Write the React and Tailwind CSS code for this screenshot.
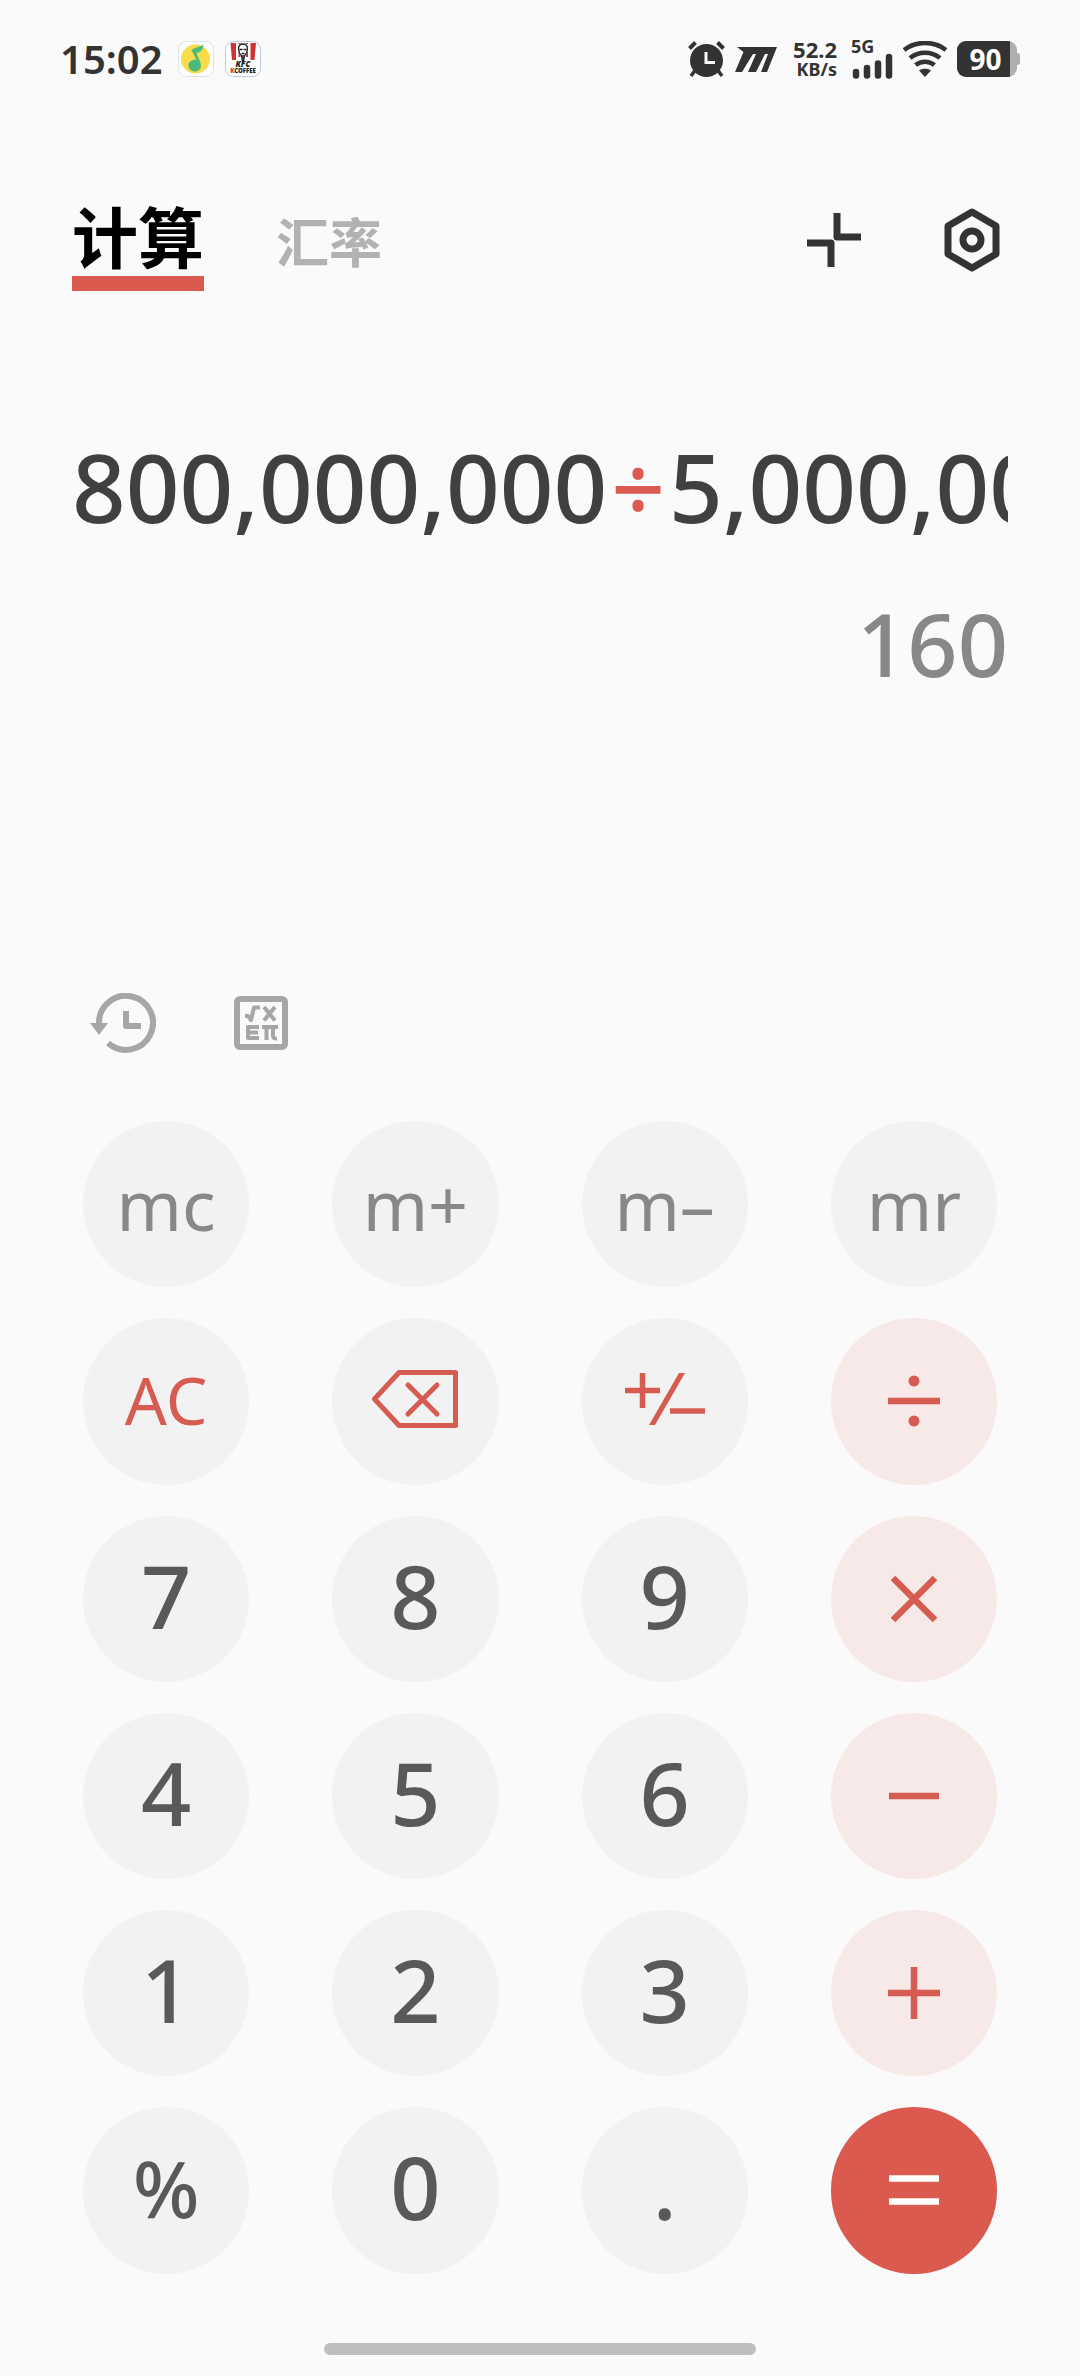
import { useState } from "react";
import clsx from "clsx";

function MusicIcon() {
  return (
    <svg viewBox="0 0 36 36" className="size-9" aria-hidden="true">
      <rect x="0.5" y="0.5" width="35" height="35" rx="8" fill="#fff" stroke="#dfe3e6" />
      <circle cx="17.5" cy="18" r="14.5" fill="#f8dc49" />
      <path
        d="M25.500 3.500c-3 2.500-7.500 2.200-12 5.500l5 10c-4-.8-8 1.500-8 5.500 0 3.500 3 6 6.500 6s6-2.800 6-6.200c0-3.300-3.500-9-4.500-12.300 3.500-.6 6.500-2.500 7-8.500z"
        fill="#4cba7c"
      />
    </svg>
  );
}

function CoffeeIcon() {
  return (
    <svg viewBox="0 0 36 36" className="size-9" aria-hidden="true">
      <rect x="0.5" y="0.5" width="35" height="35" rx="8" fill="#fff" stroke="#b9cbe0" />
      <path d="M5.500 2h5.500v17H7zM13.500 2h2v14h-2zM21 2h2v14h-2zM25.500 2H31l-1.500 17h-4z" fill="#cf3434" />
      <path d="M12.500 3h11v6l-3 6h-5l-3-6z" fill="#fff" />
      <path
        d="M13.500 8c0-3.500 2-5 4.500-5s4.500 1.500 4.500 5l-1 4-2 3-1 5h-1l-1-5-2-3z"
        fill="none"
        stroke="#222"
        strokeWidth="1.300"
      />
      <path d="M14.500 8.500h3m1 0h3M16.500 12.500h3M18 14v5" stroke="#222" strokeWidth="1.500" />
      <text x="18" y="25.500" textAnchor="middle" fontSize="8" fontWeight="900" fontStyle="italic" fill="#1b1b1b">
        KFC
      </text>
      <text x="18" y="32" textAnchor="middle" fontSize="6" fontWeight="900" fill="#1b1b1b">
        <tspan fill="#cf3434">K</tspan>COFFEE
      </text>
    </svg>
  );
}

function AlarmIcon() {
  return (
    <svg viewBox="0 0 37 37" className="size-[37px]" fill="none" aria-hidden="true">
      <path d="M8 28l-5 7M29 28l5 7" stroke="#333" strokeWidth="3.500" />
      <circle cx="18.500" cy="19.500" r="16.500" fill="#333" />
      <path d="M1.500 7.500l6-6M35.500 7.500l-6-6" stroke="#333" strokeWidth="4" />
      <path d="M18 11v10.500h9" stroke="#fafafa" strokeWidth="3" />
    </svg>
  );
}

function MotionIcon() {
  return (
    <svg viewBox="0 0 42 25" className="h-[25px] w-[42px]" fill="#333" aria-hidden="true">
      <path d="M2 0h40L32 25h-6l7-18h-3l-9 18h-8l8-18h-3L7 25H0L8.500 5z" />
    </svg>
  );
}

function SignalIcon() {
  return (
    <svg viewBox="0 0 42 26" className="h-[26px] w-[42px]" stroke="#333" strokeWidth="6.500" strokeLinecap="round" aria-hidden="true">
      <path d="M5 19v3.500M16 15v7.500M27 10.500v12M38 4v18.500" />
    </svg>
  );
}

function WifiIcon() {
  return (
    <svg viewBox="0 0 44 36" className="h-9 w-11" fill="none" stroke="#333" strokeWidth="4.500" aria-hidden="true">
      <path d="M1 9C13-.5 31-.5 43 9M7 17c8.500-7 21.500-7 30 0M12.500 24c5.500-4.500 13.500-4.500 19 0" />
      <path d="M22 36l-6-6.500c3-2.500 9-2.500 12 0z" fill="#333" stroke="none" />
    </svg>
  );
}

function Battery({ level }) {
  return (
    <div className="flex items-center">
      <div className="flex h-9 w-[60px] overflow-hidden rounded-[9px] bg-[#afafaf]">
        <span className="flex h-full w-[53px] items-center justify-center bg-[#333] pl-1 text-[28px] leading-none font-bold text-white">
          {level}
        </span>
      </div>
      <span className="h-3 w-[3px] rounded-r-full bg-[#afafaf]" />
    </div>
  );
}

function StatusBar() {
  return (
    <div className="flex h-[118px] items-center justify-between px-[60px] text-[#333]">
      <div className="flex items-center gap-[11px]">
        <span className="mr-1 text-[40px] leading-none font-semibold">15:02</span>
        <MusicIcon />
        <CoffeeIcon />
      </div>
      <div className="flex items-center gap-[10px]">
        <AlarmIcon />
        <MotionIcon />
        <div className="mr-1 flex w-[50px] flex-col items-end font-bold">
          <span className="text-[22px] leading-[20px]">52.2</span>
          <span className="text-[18px] leading-[20px]">KB/s</span>
        </div>
        <div className="flex flex-col">
          <span className="text-[18px] leading-[13px] font-bold">5G</span>
          <SignalIcon />
        </div>
        <WifiIcon />
        <Battery level={90} />
      </div>
    </div>
  );
}

function ShrinkIcon() {
  return (
    <svg viewBox="0 0 56 56" className="size-14" fill="none" stroke="#333" strokeWidth="7" strokeLinejoin="round" aria-hidden="true">
      <path d="M31 1v24h24M1 31h24v24" />
    </svg>
  );
}

function SettingsIcon() {
  return (
    <svg viewBox="0 0 56 64" className="h-16 w-14" fill="none" stroke="#333" strokeWidth="7" strokeLinejoin="round" aria-hidden="true">
      <path d="M28 4l24 14v28L28 60 4 46V18z" />
      <circle cx="28" cy="32" r="9" />
    </svg>
  );
}

function HistoryIcon() {
  return (
    <svg viewBox="0 0 66 60" className="h-[60px] w-[66px]" fill="none" stroke="#a6a6a6" strokeWidth="6" aria-hidden="true">
      <path d="M9 31a27 27 0 1 1 9 19" />
      <path d="M0 30h18l-9 12z" fill="#a6a6a6" stroke="none" />
      <path d="M36 18v15h15" strokeLinejoin="round" />
    </svg>
  );
}

function FormulaIcon() {
  return (
    <svg viewBox="0 0 54 54" className="size-[54px]" fill="none" stroke="#a6a6a6" aria-hidden="true">
      <rect x="3" y="3" width="48" height="48" rx="3" strokeWidth="6" />
      <g strokeWidth="4" strokeLinejoin="round">
        <path d="M11 20h3l3 4 3-12.500h6M30 11l11 13.500M41 11L30 24.500" />
        <path d="M25 31H14v11h11M14 36.500h10M28 31h16M32.500 31v13M39 31v9q0 3 4 2.500" />
      </g>
    </svg>
  );
}

function BackspaceIcon() {
  return (
    <svg viewBox="0 0 86 58" className="h-[58px] w-[86px]" fill="none" stroke="#d65c51" strokeWidth="5" strokeLinejoin="round" strokeLinecap="round" aria-hidden="true">
      <path d="M27 2.500h56.500v53H27L2.500 29z" />
      <path d="M36 15l29 29M65 15L36 44" />
    </svg>
  );
}

function SignIcon() {
  return (
    <svg viewBox="0 0 80 52" className="h-[52px] w-20" fill="none" stroke="#d65c51" strokeWidth="5.500" aria-hidden="true">
      <path d="M0 17.500h35M17.500 0v35M45 38h35" />
      <path d="M54 0h6L30 52h-6z" fill="#d65c51" stroke="none" />
    </svg>
  );
}

function OperatorIcon({ d, dots = false }) {
  return (
    <svg viewBox="0 0 52 52" className="size-[52px]" fill="none" stroke="currentColor" strokeWidth="6.500" aria-hidden="true">
      <path d={d} />
      {dots && (
        <g fill="currentColor" stroke="none">
          <circle cx="26" cy="6" r="5.500" />
          <circle cx="26" cy="46" r="5.500" />
        </g>
      )}
    </svg>
  );
}

const keyStyles = {
  memory: "bg-[#f2f2f2] text-[#888] text-[70px]",
  clear: "bg-[#f2f2f2] text-[#d65c51] text-[66px] pb-1",
  digit: "bg-[#f2f2f2] text-[#595959] text-[88px] font-medium pb-2",
  percent: "bg-[#f2f2f2] text-[#595959] text-[78px] font-medium pb-1",
  operator: "bg-[#f7e9e7] text-[#d65c51]",
  equals: "bg-[#da5a4f] text-white",
};

const digit = (label) => ({ label, kind: "digit" });

const keys = [
  { label: "mc", kind: "memory" },
  { label: "m+", kind: "memory" },
  { label: "m–", kind: "memory" },
  { label: "mr", kind: "memory" },
  { label: "AC", kind: "clear" },
  { label: "退格", kind: "clear", icon: <BackspaceIcon /> },
  { label: "正负", kind: "clear", icon: <SignIcon /> },
  { label: "除", kind: "operator", icon: <OperatorIcon d="M0 26h52" dots /> },
  digit("7"),
  digit("8"),
  digit("9"),
  { label: "乘", kind: "operator", icon: <OperatorIcon d="M5 5l42 42M47 5L5 47" /> },
  digit("4"),
  digit("5"),
  digit("6"),
  { label: "减", kind: "operator", icon: <OperatorIcon d="M1 26h50" /> },
  digit("1"),
  digit("2"),
  digit("3"),
  { label: "加", kind: "operator", icon: <OperatorIcon d="M0 26h52M26 0v52" /> },
  { label: "%", kind: "percent" },
  digit("0"),
  digit("."),
  { label: "等于", kind: "equals", icon: <OperatorIcon d="M1 14.500h50M1 37.500h50" /> },
];

function Key({ label, kind, icon }) {
  return (
    <button
      type="button"
      aria-label={icon ? label : undefined}
      className={clsx(
        "flex aspect-square w-full cursor-pointer items-center justify-center rounded-full leading-none active:opacity-70",
        keyStyles[kind],
      )}
    >
      {icon ?? label}
    </button>
  );
}

function Header() {
  const [tab, setTab] = useState("计算");

  return (
    <header className="flex items-start justify-between pt-[86px] pr-[80px] pl-[72px]">
      <nav className="flex items-end gap-[72px] font-['Noto_Sans_CJK_SC',sans-serif] font-bold">
        {["计算", "汇率"].map((name) => (
          <button
            key={name}
            type="button"
            onClick={() => setTab(name)}
            className={clsx(
              "cursor-pointer border-b-[15px]",
              tab === name
                ? "border-[#da5a4f] pb-3 text-[66px] leading-[60px] text-black"
                : "border-transparent text-[53px] leading-[72px] text-[#b2b2b2]",
            )}
          >
            {name}
          </button>
        ))}
      </nav>
      <div className="flex items-center gap-[82px] pt-1">
        <button type="button" aria-label="小窗" className="cursor-pointer">
          <ShrinkIcon />
        </button>
        <button type="button" aria-label="设置" className="cursor-pointer">
          <SettingsIcon />
        </button>
      </div>
    </header>
  );
}

export default function App() {
  return (
    <div className="flex min-h-screen flex-col bg-[#fafafa] font-['Noto_Sans','Noto_Sans_CJK_SC',sans-serif]">
      <StatusBar />
      <Header />

      <main className="flex flex-col">
        <section className="mt-[136px] px-[72px] font-medium">
          <div className="overflow-hidden text-[94px] leading-[120px] whitespace-nowrap text-[#404040]">
            800,000,000<span className="mx-1 text-[#da5a4f]">÷</span>5,000,000
          </div>
          <div className="mt-[42px] text-right text-[88px] leading-[108px] text-[#888]">160</div>
        </section>

        <div className="mt-[296px] flex items-center gap-[78px] px-[90px]">
          <button type="button" aria-label="历史记录" className="cursor-pointer">
            <HistoryIcon />
          </button>
          <button type="button" aria-label="科学计算" className="cursor-pointer">
            <FormulaIcon />
          </button>
        </div>

        <div className="mt-[68px] grid grid-cols-4 gap-x-[83px] gap-y-[31px] px-[83px]">
          {keys.map((key) => (
            <Key key={key.label} {...key} />
          ))}
        </div>
      </main>

      <div className="mx-auto mt-auto mb-[21px] h-3 w-2/5 rounded-full bg-[#bebebe]" />
    </div>
  );
}
